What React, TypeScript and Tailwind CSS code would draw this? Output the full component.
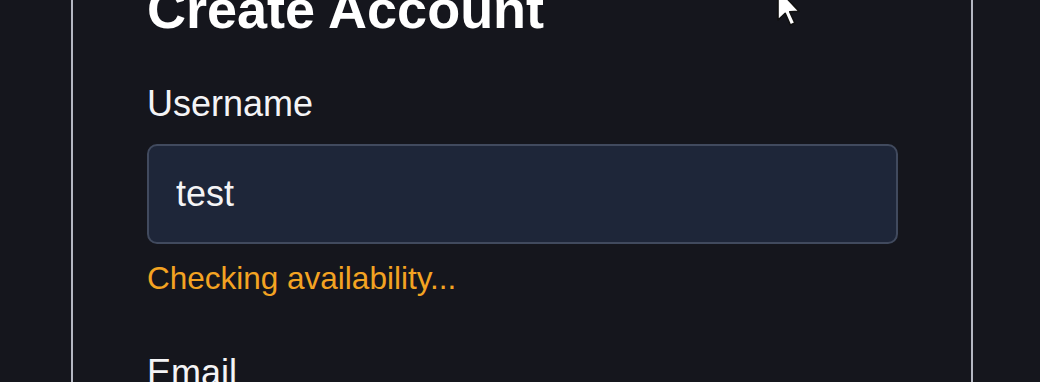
import { useState } from 'react';

const FONT = { fontFamily: '"Liberation Sans", Arial, sans-serif' };

// Mouse pointer captured in the screenshot, sits over the card
function Pointer() {
  return (
    <svg
      className="absolute left-[774px] top-[-13px] pointer-events-none"
      width="30"
      height="40"
      viewBox="0 0 13 20"
    >
      <path
        d="M1 1 L1 16.5 L4.6 13.2 L7.2 19 L9.4 18 L6.9 12.4 L11.6 12.2 Z"
        fill="#ffffff"
        stroke="#111111"
        strokeWidth="0.8"
        strokeLinejoin="round"
      />
    </svg>
  );
}

export default function App() {
  const [username, setUsername] = useState('test');

  return (
    <div className="relative w-[1040px] h-[382px] overflow-hidden bg-[#15161d]" style={FONT}>
      <div className="ml-[71px] w-[902px] h-full border-x-2 border-[#b4b7c2] pl-[74px] pr-[73px] flex flex-col">
        <h1 className="shrink-0 mt-[-18px] text-[54px] leading-[54px] font-bold text-white">
          Create Account
        </h1>

        <label className="shrink-0 mt-[41px] text-[36px] leading-[54px] text-[#f4f4f6]">Username</label>
        <div className="shrink-0 mt-[13px] h-[100px] rounded-[10px] border-2 border-[#414a5e] bg-[#1e2639] flex items-center px-[27px]">
          <input
            value={username}
            onChange={e => setUsername(e.target.value)}
            className="w-full bg-transparent outline-none text-[36px] leading-[54px] text-[#f4f4f6]"
            style={FONT}
          />
        </div>
        <p className="shrink-0 mt-[12px] text-[31.5px] leading-[45px] text-[#f3a322]">Checking availability...</p>

        <label className="shrink-0 mt-[45px] text-[36px] leading-[54px] text-[#f4f4f6]">Email</label>
      </div>
      <Pointer />
    </div>
  );
}
